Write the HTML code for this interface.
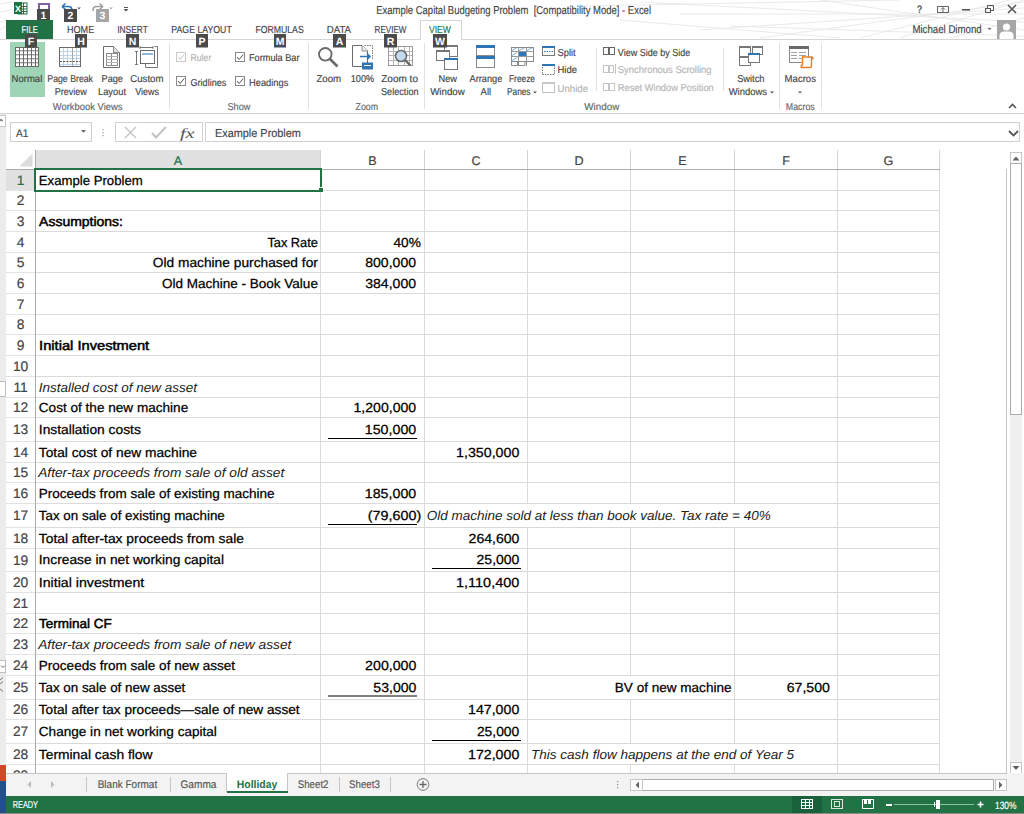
<!DOCTYPE html>
<html><head><meta charset="utf-8"><title>Excel</title>
<style>
html,body{margin:0;padding:0;width:1024px;height:814px;overflow:hidden;background:#fff;}
svg{display:block;font-family:"Liberation Sans", sans-serif;}
</style></head><body>
<svg width="1024" height="814" viewBox="0 0 1024 814" text-rendering="geometricPrecision">
<rect x="0" y="113" width="6" height="701" fill="#ececec" />
<rect x="-0.5" y="381.5" width="6" height="15" fill="#ffffff" stroke="#bdbdbd" stroke-width="1"/>
<rect x="-0.5" y="660.5" width="6" height="12" fill="#ffffff" stroke="#bdbdbd" stroke-width="1"/>
<path d="M1 665.5 L3 667.5 L5 665.5" fill="none" stroke="#666" stroke-width="1" />
<path d="M0 680 L3 677.5 M0 684 L3 681.5 M0 689 L3 691.5" fill="none" stroke="#777" stroke-width="1" />
<rect x="0" y="765" width="6" height="16" fill="#d24726" />
<rect x="0" y="781" width="6" height="33" fill="#234f8a" />
<rect x="6" y="150" width="1000" height="19" fill="#ffffff" />
<rect x="36" y="150" width="284" height="19" fill="#e1e1e1" />
<rect x="6" y="170" width="29" height="20" fill="#e1e1e1" />
<path d="M32.5 153.5 L32.5 166.5 L19.5 166.5 Z" fill="#dcdcdc" stroke="none" stroke-width="1" />
<rect x="6" y="169" width="934" height="1" fill="#ababab" />
<rect x="6" y="190" width="29" height="1" fill="#e3e3e3" />
<rect x="36" y="190" width="904" height="1" fill="#dadada" />
<rect x="6" y="210" width="29" height="1" fill="#e3e3e3" />
<rect x="36" y="210" width="904" height="1" fill="#dadada" />
<rect x="6" y="231" width="29" height="1" fill="#e3e3e3" />
<rect x="36" y="231" width="904" height="1" fill="#dadada" />
<rect x="6" y="252" width="29" height="1" fill="#e3e3e3" />
<rect x="36" y="252" width="904" height="1" fill="#dadada" />
<rect x="6" y="272" width="29" height="1" fill="#e3e3e3" />
<rect x="36" y="272" width="904" height="1" fill="#dadada" />
<rect x="6" y="293" width="29" height="1" fill="#e3e3e3" />
<rect x="36" y="293" width="904" height="1" fill="#dadada" />
<rect x="6" y="314" width="29" height="1" fill="#e3e3e3" />
<rect x="36" y="314" width="904" height="1" fill="#dadada" />
<rect x="6" y="334" width="29" height="1" fill="#e3e3e3" />
<rect x="36" y="334" width="904" height="1" fill="#dadada" />
<rect x="6" y="355" width="29" height="1" fill="#e3e3e3" />
<rect x="36" y="355" width="904" height="1" fill="#dadada" />
<rect x="6" y="376" width="29" height="1" fill="#e3e3e3" />
<rect x="36" y="376" width="904" height="1" fill="#dadada" />
<rect x="6" y="397" width="29" height="1" fill="#e3e3e3" />
<rect x="36" y="397" width="904" height="1" fill="#dadada" />
<rect x="6" y="417" width="29" height="1" fill="#e3e3e3" />
<rect x="36" y="417" width="904" height="1" fill="#dadada" />
<rect x="6" y="441" width="29" height="1" fill="#e3e3e3" />
<rect x="36" y="441" width="904" height="1" fill="#dadada" />
<rect x="6" y="462" width="29" height="1" fill="#e3e3e3" />
<rect x="36" y="462" width="904" height="1" fill="#dadada" />
<rect x="6" y="482" width="29" height="1" fill="#e3e3e3" />
<rect x="36" y="482" width="904" height="1" fill="#dadada" />
<rect x="6" y="503" width="29" height="1" fill="#e3e3e3" />
<rect x="36" y="503" width="904" height="1" fill="#dadada" />
<rect x="6" y="527" width="29" height="1" fill="#e3e3e3" />
<rect x="36" y="527" width="904" height="1" fill="#dadada" />
<rect x="6" y="548" width="29" height="1" fill="#e3e3e3" />
<rect x="36" y="548" width="904" height="1" fill="#dadada" />
<rect x="6" y="571" width="29" height="1" fill="#e3e3e3" />
<rect x="36" y="571" width="904" height="1" fill="#dadada" />
<rect x="6" y="592" width="29" height="1" fill="#e3e3e3" />
<rect x="36" y="592" width="904" height="1" fill="#dadada" />
<rect x="6" y="613" width="29" height="1" fill="#e3e3e3" />
<rect x="36" y="613" width="904" height="1" fill="#dadada" />
<rect x="6" y="633" width="29" height="1" fill="#e3e3e3" />
<rect x="36" y="633" width="904" height="1" fill="#dadada" />
<rect x="6" y="654" width="29" height="1" fill="#e3e3e3" />
<rect x="36" y="654" width="904" height="1" fill="#dadada" />
<rect x="6" y="675" width="29" height="1" fill="#e3e3e3" />
<rect x="36" y="675" width="904" height="1" fill="#dadada" />
<rect x="6" y="699" width="29" height="1" fill="#e3e3e3" />
<rect x="36" y="699" width="904" height="1" fill="#dadada" />
<rect x="6" y="719" width="29" height="1" fill="#e3e3e3" />
<rect x="36" y="719" width="904" height="1" fill="#dadada" />
<rect x="6" y="743" width="29" height="1" fill="#e3e3e3" />
<rect x="36" y="743" width="904" height="1" fill="#dadada" />
<rect x="6" y="764" width="29" height="1" fill="#e3e3e3" />
<rect x="36" y="764" width="904" height="1" fill="#dadada" />
<rect x="6" y="773" width="1001" height="1" fill="#c6c6c6" />
<rect x="35" y="150" width="1" height="623" fill="#ababab" />
<rect x="320" y="150" width="1" height="19" fill="#d4d4d4" />
<rect x="320" y="170" width="1" height="20" fill="#dadada" />
<rect x="320" y="191" width="1" height="19" fill="#dadada" />
<rect x="320" y="211" width="1" height="20" fill="#dadada" />
<rect x="320" y="232" width="1" height="20" fill="#dadada" />
<rect x="320" y="253" width="1" height="19" fill="#dadada" />
<rect x="320" y="273" width="1" height="20" fill="#dadada" />
<rect x="320" y="294" width="1" height="20" fill="#dadada" />
<rect x="320" y="315" width="1" height="19" fill="#dadada" />
<rect x="320" y="335" width="1" height="20" fill="#dadada" />
<rect x="320" y="356" width="1" height="20" fill="#dadada" />
<rect x="320" y="377" width="1" height="20" fill="#dadada" />
<rect x="320" y="398" width="1" height="19" fill="#dadada" />
<rect x="320" y="418" width="1" height="23" fill="#dadada" />
<rect x="320" y="442" width="1" height="20" fill="#dadada" />
<rect x="320" y="463" width="1" height="19" fill="#dadada" />
<rect x="320" y="483" width="1" height="20" fill="#dadada" />
<rect x="320" y="504" width="1" height="23" fill="#dadada" />
<rect x="320" y="528" width="1" height="20" fill="#dadada" />
<rect x="320" y="549" width="1" height="22" fill="#dadada" />
<rect x="320" y="572" width="1" height="20" fill="#dadada" />
<rect x="320" y="593" width="1" height="20" fill="#dadada" />
<rect x="320" y="614" width="1" height="19" fill="#dadada" />
<rect x="320" y="634" width="1" height="20" fill="#dadada" />
<rect x="320" y="655" width="1" height="20" fill="#dadada" />
<rect x="320" y="676" width="1" height="23" fill="#dadada" />
<rect x="320" y="700" width="1" height="19" fill="#dadada" />
<rect x="320" y="720" width="1" height="23" fill="#dadada" />
<rect x="320" y="744" width="1" height="20" fill="#dadada" />
<rect x="320" y="765" width="1" height="8" fill="#dadada" />
<rect x="424" y="150" width="1" height="19" fill="#d4d4d4" />
<rect x="424" y="170" width="1" height="20" fill="#dadada" />
<rect x="424" y="191" width="1" height="19" fill="#dadada" />
<rect x="424" y="211" width="1" height="20" fill="#dadada" />
<rect x="424" y="232" width="1" height="20" fill="#dadada" />
<rect x="424" y="253" width="1" height="19" fill="#dadada" />
<rect x="424" y="273" width="1" height="20" fill="#dadada" />
<rect x="424" y="294" width="1" height="20" fill="#dadada" />
<rect x="424" y="315" width="1" height="19" fill="#dadada" />
<rect x="424" y="335" width="1" height="20" fill="#dadada" />
<rect x="424" y="356" width="1" height="20" fill="#dadada" />
<rect x="424" y="377" width="1" height="20" fill="#dadada" />
<rect x="424" y="398" width="1" height="19" fill="#dadada" />
<rect x="424" y="418" width="1" height="23" fill="#dadada" />
<rect x="424" y="442" width="1" height="20" fill="#dadada" />
<rect x="424" y="463" width="1" height="19" fill="#dadada" />
<rect x="424" y="483" width="1" height="20" fill="#dadada" />
<rect x="424" y="504" width="1" height="23" fill="#dadada" />
<rect x="424" y="528" width="1" height="20" fill="#dadada" />
<rect x="424" y="549" width="1" height="22" fill="#dadada" />
<rect x="424" y="572" width="1" height="20" fill="#dadada" />
<rect x="424" y="593" width="1" height="20" fill="#dadada" />
<rect x="424" y="614" width="1" height="19" fill="#dadada" />
<rect x="424" y="634" width="1" height="20" fill="#dadada" />
<rect x="424" y="655" width="1" height="20" fill="#dadada" />
<rect x="424" y="676" width="1" height="23" fill="#dadada" />
<rect x="424" y="700" width="1" height="19" fill="#dadada" />
<rect x="424" y="720" width="1" height="23" fill="#dadada" />
<rect x="424" y="744" width="1" height="20" fill="#dadada" />
<rect x="424" y="765" width="1" height="8" fill="#dadada" />
<rect x="527" y="150" width="1" height="19" fill="#d4d4d4" />
<rect x="527" y="170" width="1" height="20" fill="#dadada" />
<rect x="527" y="191" width="1" height="19" fill="#dadada" />
<rect x="527" y="211" width="1" height="20" fill="#dadada" />
<rect x="527" y="232" width="1" height="20" fill="#dadada" />
<rect x="527" y="253" width="1" height="19" fill="#dadada" />
<rect x="527" y="273" width="1" height="20" fill="#dadada" />
<rect x="527" y="294" width="1" height="20" fill="#dadada" />
<rect x="527" y="315" width="1" height="19" fill="#dadada" />
<rect x="527" y="335" width="1" height="20" fill="#dadada" />
<rect x="527" y="356" width="1" height="20" fill="#dadada" />
<rect x="527" y="377" width="1" height="20" fill="#dadada" />
<rect x="527" y="398" width="1" height="19" fill="#dadada" />
<rect x="527" y="418" width="1" height="23" fill="#dadada" />
<rect x="527" y="442" width="1" height="20" fill="#dadada" />
<rect x="527" y="463" width="1" height="19" fill="#dadada" />
<rect x="527" y="483" width="1" height="20" fill="#dadada" />
<rect x="527" y="528" width="1" height="20" fill="#dadada" />
<rect x="527" y="549" width="1" height="22" fill="#dadada" />
<rect x="527" y="572" width="1" height="20" fill="#dadada" />
<rect x="527" y="593" width="1" height="20" fill="#dadada" />
<rect x="527" y="614" width="1" height="19" fill="#dadada" />
<rect x="527" y="634" width="1" height="20" fill="#dadada" />
<rect x="527" y="655" width="1" height="20" fill="#dadada" />
<rect x="527" y="676" width="1" height="23" fill="#dadada" />
<rect x="527" y="700" width="1" height="19" fill="#dadada" />
<rect x="527" y="720" width="1" height="23" fill="#dadada" />
<rect x="527" y="744" width="1" height="20" fill="#dadada" />
<rect x="527" y="765" width="1" height="8" fill="#dadada" />
<rect x="630" y="150" width="1" height="19" fill="#d4d4d4" />
<rect x="630" y="170" width="1" height="20" fill="#dadada" />
<rect x="630" y="191" width="1" height="19" fill="#dadada" />
<rect x="630" y="211" width="1" height="20" fill="#dadada" />
<rect x="630" y="232" width="1" height="20" fill="#dadada" />
<rect x="630" y="253" width="1" height="19" fill="#dadada" />
<rect x="630" y="273" width="1" height="20" fill="#dadada" />
<rect x="630" y="294" width="1" height="20" fill="#dadada" />
<rect x="630" y="315" width="1" height="19" fill="#dadada" />
<rect x="630" y="335" width="1" height="20" fill="#dadada" />
<rect x="630" y="356" width="1" height="20" fill="#dadada" />
<rect x="630" y="377" width="1" height="20" fill="#dadada" />
<rect x="630" y="398" width="1" height="19" fill="#dadada" />
<rect x="630" y="418" width="1" height="23" fill="#dadada" />
<rect x="630" y="442" width="1" height="20" fill="#dadada" />
<rect x="630" y="463" width="1" height="19" fill="#dadada" />
<rect x="630" y="483" width="1" height="20" fill="#dadada" />
<rect x="630" y="528" width="1" height="20" fill="#dadada" />
<rect x="630" y="549" width="1" height="22" fill="#dadada" />
<rect x="630" y="572" width="1" height="20" fill="#dadada" />
<rect x="630" y="593" width="1" height="20" fill="#dadada" />
<rect x="630" y="614" width="1" height="19" fill="#dadada" />
<rect x="630" y="634" width="1" height="20" fill="#dadada" />
<rect x="630" y="655" width="1" height="20" fill="#dadada" />
<rect x="630" y="700" width="1" height="19" fill="#dadada" />
<rect x="630" y="720" width="1" height="23" fill="#dadada" />
<rect x="630" y="765" width="1" height="8" fill="#dadada" />
<rect x="734" y="150" width="1" height="19" fill="#d4d4d4" />
<rect x="734" y="170" width="1" height="20" fill="#dadada" />
<rect x="734" y="191" width="1" height="19" fill="#dadada" />
<rect x="734" y="211" width="1" height="20" fill="#dadada" />
<rect x="734" y="232" width="1" height="20" fill="#dadada" />
<rect x="734" y="253" width="1" height="19" fill="#dadada" />
<rect x="734" y="273" width="1" height="20" fill="#dadada" />
<rect x="734" y="294" width="1" height="20" fill="#dadada" />
<rect x="734" y="315" width="1" height="19" fill="#dadada" />
<rect x="734" y="335" width="1" height="20" fill="#dadada" />
<rect x="734" y="356" width="1" height="20" fill="#dadada" />
<rect x="734" y="377" width="1" height="20" fill="#dadada" />
<rect x="734" y="398" width="1" height="19" fill="#dadada" />
<rect x="734" y="418" width="1" height="23" fill="#dadada" />
<rect x="734" y="442" width="1" height="20" fill="#dadada" />
<rect x="734" y="463" width="1" height="19" fill="#dadada" />
<rect x="734" y="483" width="1" height="20" fill="#dadada" />
<rect x="734" y="528" width="1" height="20" fill="#dadada" />
<rect x="734" y="549" width="1" height="22" fill="#dadada" />
<rect x="734" y="572" width="1" height="20" fill="#dadada" />
<rect x="734" y="593" width="1" height="20" fill="#dadada" />
<rect x="734" y="614" width="1" height="19" fill="#dadada" />
<rect x="734" y="634" width="1" height="20" fill="#dadada" />
<rect x="734" y="655" width="1" height="20" fill="#dadada" />
<rect x="734" y="676" width="1" height="23" fill="#dadada" />
<rect x="734" y="700" width="1" height="19" fill="#dadada" />
<rect x="734" y="720" width="1" height="23" fill="#dadada" />
<rect x="734" y="765" width="1" height="8" fill="#dadada" />
<rect x="837" y="150" width="1" height="19" fill="#d4d4d4" />
<rect x="837" y="170" width="1" height="20" fill="#dadada" />
<rect x="837" y="191" width="1" height="19" fill="#dadada" />
<rect x="837" y="211" width="1" height="20" fill="#dadada" />
<rect x="837" y="232" width="1" height="20" fill="#dadada" />
<rect x="837" y="253" width="1" height="19" fill="#dadada" />
<rect x="837" y="273" width="1" height="20" fill="#dadada" />
<rect x="837" y="294" width="1" height="20" fill="#dadada" />
<rect x="837" y="315" width="1" height="19" fill="#dadada" />
<rect x="837" y="335" width="1" height="20" fill="#dadada" />
<rect x="837" y="356" width="1" height="20" fill="#dadada" />
<rect x="837" y="377" width="1" height="20" fill="#dadada" />
<rect x="837" y="398" width="1" height="19" fill="#dadada" />
<rect x="837" y="418" width="1" height="23" fill="#dadada" />
<rect x="837" y="442" width="1" height="20" fill="#dadada" />
<rect x="837" y="463" width="1" height="19" fill="#dadada" />
<rect x="837" y="483" width="1" height="20" fill="#dadada" />
<rect x="837" y="504" width="1" height="23" fill="#dadada" />
<rect x="837" y="528" width="1" height="20" fill="#dadada" />
<rect x="837" y="549" width="1" height="22" fill="#dadada" />
<rect x="837" y="572" width="1" height="20" fill="#dadada" />
<rect x="837" y="593" width="1" height="20" fill="#dadada" />
<rect x="837" y="614" width="1" height="19" fill="#dadada" />
<rect x="837" y="634" width="1" height="20" fill="#dadada" />
<rect x="837" y="655" width="1" height="20" fill="#dadada" />
<rect x="837" y="676" width="1" height="23" fill="#dadada" />
<rect x="837" y="700" width="1" height="19" fill="#dadada" />
<rect x="837" y="720" width="1" height="23" fill="#dadada" />
<rect x="837" y="744" width="1" height="20" fill="#dadada" />
<rect x="837" y="765" width="1" height="8" fill="#dadada" />
<rect x="939" y="150" width="1" height="19" fill="#d4d4d4" />
<rect x="939" y="170" width="1" height="20" fill="#dadada" />
<rect x="939" y="191" width="1" height="19" fill="#dadada" />
<rect x="939" y="211" width="1" height="20" fill="#dadada" />
<rect x="939" y="232" width="1" height="20" fill="#dadada" />
<rect x="939" y="253" width="1" height="19" fill="#dadada" />
<rect x="939" y="273" width="1" height="20" fill="#dadada" />
<rect x="939" y="294" width="1" height="20" fill="#dadada" />
<rect x="939" y="315" width="1" height="19" fill="#dadada" />
<rect x="939" y="335" width="1" height="20" fill="#dadada" />
<rect x="939" y="356" width="1" height="20" fill="#dadada" />
<rect x="939" y="377" width="1" height="20" fill="#dadada" />
<rect x="939" y="398" width="1" height="19" fill="#dadada" />
<rect x="939" y="418" width="1" height="23" fill="#dadada" />
<rect x="939" y="442" width="1" height="20" fill="#dadada" />
<rect x="939" y="463" width="1" height="19" fill="#dadada" />
<rect x="939" y="483" width="1" height="20" fill="#dadada" />
<rect x="939" y="504" width="1" height="23" fill="#dadada" />
<rect x="939" y="528" width="1" height="20" fill="#dadada" />
<rect x="939" y="549" width="1" height="22" fill="#dadada" />
<rect x="939" y="572" width="1" height="20" fill="#dadada" />
<rect x="939" y="593" width="1" height="20" fill="#dadada" />
<rect x="939" y="614" width="1" height="19" fill="#dadada" />
<rect x="939" y="634" width="1" height="20" fill="#dadada" />
<rect x="939" y="655" width="1" height="20" fill="#dadada" />
<rect x="939" y="676" width="1" height="23" fill="#dadada" />
<rect x="939" y="700" width="1" height="19" fill="#dadada" />
<rect x="939" y="720" width="1" height="23" fill="#dadada" />
<rect x="939" y="744" width="1" height="20" fill="#dadada" />
<rect x="939" y="765" width="1" height="8" fill="#dadada" />
<rect x="1006" y="169" width="1" height="605" fill="#c6c6c6" />
<text x="178.00" y="165.00" font-size="12.6" fill="#217346" font-weight="normal" font-style="normal" text-anchor="middle" stroke="#217346" stroke-width="0.2">A</text>
<text x="372.50" y="165.00" font-size="12.6" fill="#444444" font-weight="normal" font-style="normal" text-anchor="middle" stroke="#444444" stroke-width="0.2">B</text>
<text x="476.00" y="165.00" font-size="12.6" fill="#444444" font-weight="normal" font-style="normal" text-anchor="middle" stroke="#444444" stroke-width="0.2">C</text>
<text x="579.00" y="165.00" font-size="12.6" fill="#444444" font-weight="normal" font-style="normal" text-anchor="middle" stroke="#444444" stroke-width="0.2">D</text>
<text x="682.50" y="165.00" font-size="12.6" fill="#444444" font-weight="normal" font-style="normal" text-anchor="middle" stroke="#444444" stroke-width="0.2">E</text>
<text x="786.00" y="165.00" font-size="12.6" fill="#444444" font-weight="normal" font-style="normal" text-anchor="middle" stroke="#444444" stroke-width="0.2">F</text>
<text x="888.50" y="165.00" font-size="12.6" fill="#444444" font-weight="normal" font-style="normal" text-anchor="middle" stroke="#444444" stroke-width="0.2">G</text>
<text x="20.60" y="184.70" font-size="13.8" fill="#217346" font-weight="normal" font-style="normal" text-anchor="middle" stroke="#217346" stroke-width="0.2">1</text>
<text x="20.60" y="205.20" font-size="13.8" fill="#444444" font-weight="normal" font-style="normal" text-anchor="middle" stroke="#444444" stroke-width="0.2">2</text>
<text x="20.60" y="225.70" font-size="13.8" fill="#444444" font-weight="normal" font-style="normal" text-anchor="middle" stroke="#444444" stroke-width="0.2">3</text>
<text x="20.60" y="246.70" font-size="13.8" fill="#444444" font-weight="normal" font-style="normal" text-anchor="middle" stroke="#444444" stroke-width="0.2">4</text>
<text x="20.60" y="267.20" font-size="13.8" fill="#444444" font-weight="normal" font-style="normal" text-anchor="middle" stroke="#444444" stroke-width="0.2">5</text>
<text x="20.60" y="287.70" font-size="13.8" fill="#444444" font-weight="normal" font-style="normal" text-anchor="middle" stroke="#444444" stroke-width="0.2">6</text>
<text x="20.60" y="308.70" font-size="13.8" fill="#444444" font-weight="normal" font-style="normal" text-anchor="middle" stroke="#444444" stroke-width="0.2">7</text>
<text x="20.60" y="329.20" font-size="13.8" fill="#444444" font-weight="normal" font-style="normal" text-anchor="middle" stroke="#444444" stroke-width="0.2">8</text>
<text x="20.60" y="349.70" font-size="13.8" fill="#444444" font-weight="normal" font-style="normal" text-anchor="middle" stroke="#444444" stroke-width="0.2">9</text>
<text x="20.60" y="370.70" font-size="13.8" fill="#444444" font-weight="normal" font-style="normal" text-anchor="middle" stroke="#444444" stroke-width="0.2">10</text>
<text x="20.60" y="391.70" font-size="13.8" fill="#444444" font-weight="normal" font-style="normal" text-anchor="middle" stroke="#444444" stroke-width="0.2">11</text>
<text x="20.60" y="412.20" font-size="13.8" fill="#444444" font-weight="normal" font-style="normal" text-anchor="middle" stroke="#444444" stroke-width="0.2">12</text>
<text x="20.60" y="434.20" font-size="13.8" fill="#444444" font-weight="normal" font-style="normal" text-anchor="middle" stroke="#444444" stroke-width="0.2">13</text>
<text x="20.60" y="456.70" font-size="13.8" fill="#444444" font-weight="normal" font-style="normal" text-anchor="middle" stroke="#444444" stroke-width="0.2">14</text>
<text x="20.60" y="477.20" font-size="13.8" fill="#444444" font-weight="normal" font-style="normal" text-anchor="middle" stroke="#444444" stroke-width="0.2">15</text>
<text x="20.60" y="497.70" font-size="13.8" fill="#444444" font-weight="normal" font-style="normal" text-anchor="middle" stroke="#444444" stroke-width="0.2">16</text>
<text x="20.60" y="520.20" font-size="13.8" fill="#444444" font-weight="normal" font-style="normal" text-anchor="middle" stroke="#444444" stroke-width="0.2">17</text>
<text x="20.60" y="542.70" font-size="13.8" fill="#444444" font-weight="normal" font-style="normal" text-anchor="middle" stroke="#444444" stroke-width="0.2">18</text>
<text x="20.60" y="564.70" font-size="13.8" fill="#444444" font-weight="normal" font-style="normal" text-anchor="middle" stroke="#444444" stroke-width="0.2">19</text>
<text x="20.60" y="586.70" font-size="13.8" fill="#444444" font-weight="normal" font-style="normal" text-anchor="middle" stroke="#444444" stroke-width="0.2">20</text>
<text x="20.60" y="607.70" font-size="13.8" fill="#444444" font-weight="normal" font-style="normal" text-anchor="middle" stroke="#444444" stroke-width="0.2">21</text>
<text x="20.60" y="628.20" font-size="13.8" fill="#444444" font-weight="normal" font-style="normal" text-anchor="middle" stroke="#444444" stroke-width="0.2">22</text>
<text x="20.60" y="648.70" font-size="13.8" fill="#444444" font-weight="normal" font-style="normal" text-anchor="middle" stroke="#444444" stroke-width="0.2">23</text>
<text x="20.60" y="669.70" font-size="13.8" fill="#444444" font-weight="normal" font-style="normal" text-anchor="middle" stroke="#444444" stroke-width="0.2">24</text>
<text x="20.60" y="692.20" font-size="13.8" fill="#444444" font-weight="normal" font-style="normal" text-anchor="middle" stroke="#444444" stroke-width="0.2">25</text>
<text x="20.60" y="714.20" font-size="13.8" fill="#444444" font-weight="normal" font-style="normal" text-anchor="middle" stroke="#444444" stroke-width="0.2">26</text>
<text x="20.60" y="736.20" font-size="13.8" fill="#444444" font-weight="normal" font-style="normal" text-anchor="middle" stroke="#444444" stroke-width="0.2">27</text>
<text x="20.60" y="758.70" font-size="13.8" fill="#444444" font-weight="normal" font-style="normal" text-anchor="middle" stroke="#444444" stroke-width="0.2">28</text>
<clipPath id="c29"><rect x="6" y="765" width="29" height="8"/></clipPath>
<text clip-path="url(#c29)" x="20.60" y="780.00" font-size="13.8" fill="#444444" font-weight="normal" font-style="normal" text-anchor="middle" stroke="#444444" stroke-width="0.2">29</text>
<rect x="34" y="168" width="288" height="2" fill="#217346" />
<rect x="34" y="190" width="285" height="2" fill="#217346" />
<rect x="34" y="168" width="2" height="24" fill="#217346" />
<rect x="320" y="168" width="2" height="19" fill="#217346" />
<rect x="319" y="188" width="4" height="4" fill="#217346" />
<text x="38.80" y="185.00" font-size="13.2" fill="#000000" font-weight="normal" font-style="normal" textLength="103.90" lengthAdjust="spacingAndGlyphs" stroke="#000000" stroke-width="0.25">Example Problem</text>
<text x="39.10" y="226.00" font-size="13.2" fill="#000000" font-weight="normal" font-style="normal" textLength="83.90" lengthAdjust="spacingAndGlyphs" stroke="#000000" stroke-width="0.5">Assumptions:</text>
<text x="267.40" y="247.00" font-size="13.2" fill="#000000" font-weight="normal" font-style="normal" textLength="50.50" lengthAdjust="spacingAndGlyphs" stroke="#000000" stroke-width="0.25">Tax Rate</text>
<text x="152.70" y="267.00" font-size="13.2" fill="#000000" font-weight="normal" font-style="normal" textLength="165.20" lengthAdjust="spacingAndGlyphs" stroke="#000000" stroke-width="0.25">Old machine purchased for</text>
<text x="162.00" y="288.00" font-size="13.2" fill="#000000" font-weight="normal" font-style="normal" textLength="155.90" lengthAdjust="spacingAndGlyphs" stroke="#000000" stroke-width="0.25">Old Machine - Book Value</text>
<text x="393.50" y="247.00" font-size="13.2" fill="#000000" font-weight="normal" font-style="normal" textLength="27.40" lengthAdjust="spacingAndGlyphs" stroke="#000000" stroke-width="0.25">40%</text>
<text x="365.20" y="267.00" font-size="13.2" fill="#000000" font-weight="normal" font-style="normal" textLength="50.90" lengthAdjust="spacingAndGlyphs" stroke="#000000" stroke-width="0.25">800,000</text>
<text x="365.20" y="288.00" font-size="13.2" fill="#000000" font-weight="normal" font-style="normal" textLength="50.90" lengthAdjust="spacingAndGlyphs" stroke="#000000" stroke-width="0.25">384,000</text>
<text x="39.10" y="350.00" font-size="13.2" fill="#000000" font-weight="normal" font-style="normal" textLength="110.10" lengthAdjust="spacingAndGlyphs" stroke="#000000" stroke-width="0.5">Initial Investment</text>
<text x="38.80" y="392.00" font-size="13.2" fill="#222" font-weight="normal" font-style="italic" textLength="158.20" lengthAdjust="spacingAndGlyphs">Installed cost of new asset</text>
<text x="38.80" y="412.00" font-size="13.2" fill="#000000" font-weight="normal" font-style="normal" textLength="149.40" lengthAdjust="spacingAndGlyphs" stroke="#000000" stroke-width="0.25">Cost of the new machine</text>
<text x="38.80" y="433.70" font-size="13.2" fill="#000000" font-weight="normal" font-style="normal" textLength="102.00" lengthAdjust="spacingAndGlyphs" stroke="#000000" stroke-width="0.25">Installation costs</text>
<text x="38.80" y="457.00" font-size="13.2" fill="#000000" font-weight="normal" font-style="normal" textLength="158.20" lengthAdjust="spacingAndGlyphs" stroke="#000000" stroke-width="0.25">Total cost of new machine</text>
<text x="38.20" y="477.00" font-size="13.2" fill="#222" font-weight="normal" font-style="italic" textLength="246.10" lengthAdjust="spacingAndGlyphs">After-tax proceeds from sale of old asset</text>
<text x="38.80" y="498.00" font-size="13.2" fill="#000000" font-weight="normal" font-style="normal" textLength="235.80" lengthAdjust="spacingAndGlyphs" stroke="#000000" stroke-width="0.25">Proceeds from sale of existing machine</text>
<text x="38.80" y="519.70" font-size="13.2" fill="#000000" font-weight="normal" font-style="normal" textLength="186.00" lengthAdjust="spacingAndGlyphs" stroke="#000000" stroke-width="0.25">Tax on sale of existing machine</text>
<text x="38.80" y="543.00" font-size="13.2" fill="#000000" font-weight="normal" font-style="normal" textLength="205.10" lengthAdjust="spacingAndGlyphs" stroke="#000000" stroke-width="0.25">Total after-tax proceeds from sale</text>
<text x="38.80" y="563.70" font-size="13.2" fill="#000000" font-weight="normal" font-style="normal" textLength="185.20" lengthAdjust="spacingAndGlyphs" stroke="#000000" stroke-width="0.25">Increase in net working capital</text>
<text x="38.80" y="587.00" font-size="13.2" fill="#000000" font-weight="normal" font-style="normal" textLength="105.50" lengthAdjust="spacingAndGlyphs" stroke="#000000" stroke-width="0.25">Initial investment</text>
<text x="39.10" y="628.00" font-size="13.2" fill="#000000" font-weight="normal" font-style="normal" textLength="72.60" lengthAdjust="spacingAndGlyphs" stroke="#000000" stroke-width="0.5">Terminal CF</text>
<text x="38.20" y="649.00" font-size="13.2" fill="#222" font-weight="normal" font-style="italic" textLength="253.20" lengthAdjust="spacingAndGlyphs">After-tax proceeds from sale of new asset</text>
<text x="38.80" y="670.00" font-size="13.2" fill="#000000" font-weight="normal" font-style="normal" textLength="196.30" lengthAdjust="spacingAndGlyphs" stroke="#000000" stroke-width="0.25">Proceeds from sale of new asset</text>
<text x="38.80" y="691.70" font-size="13.2" fill="#000000" font-weight="normal" font-style="normal" textLength="146.50" lengthAdjust="spacingAndGlyphs" stroke="#000000" stroke-width="0.25">Tax on sale of new asset</text>
<text x="38.80" y="714.00" font-size="13.2" fill="#000000" font-weight="normal" font-style="normal" textLength="260.80" lengthAdjust="spacingAndGlyphs" stroke="#000000" stroke-width="0.25">Total after tax proceeds—sale of new asset</text>
<text x="38.80" y="735.70" font-size="13.2" fill="#000000" font-weight="normal" font-style="normal" textLength="178.10" lengthAdjust="spacingAndGlyphs" stroke="#000000" stroke-width="0.25">Change in net working capital</text>
<text x="38.80" y="759.00" font-size="13.2" fill="#000000" font-weight="normal" font-style="normal" textLength="113.70" lengthAdjust="spacingAndGlyphs" stroke="#000000" stroke-width="0.25">Terminal cash flow</text>
<text x="353.50" y="412.00" font-size="13.2" fill="#000000" font-weight="normal" font-style="normal" textLength="62.70" lengthAdjust="spacingAndGlyphs" stroke="#000000" stroke-width="0.25">1,200,000</text>
<text x="364.80" y="433.70" font-size="13.2" fill="#000000" font-weight="normal" font-style="normal" textLength="51.40" lengthAdjust="spacingAndGlyphs" stroke="#000000" stroke-width="0.25">150,000</text>
<rect x="328" y="438" width="89" height="1" fill="#000" />
<text x="456.00" y="457.00" font-size="13.2" fill="#000000" font-weight="normal" font-style="normal" textLength="63.40" lengthAdjust="spacingAndGlyphs" stroke="#000000" stroke-width="0.25">1,350,000</text>
<text x="364.80" y="498.00" font-size="13.2" fill="#000000" font-weight="normal" font-style="normal" textLength="51.40" lengthAdjust="spacingAndGlyphs" stroke="#000000" stroke-width="0.25">185,000</text>
<text x="367.80" y="519.70" font-size="13.2" fill="#000000" font-weight="normal" font-style="normal" textLength="53.40" lengthAdjust="spacingAndGlyphs" stroke="#000000" stroke-width="0.25">(79,600)</text>
<rect x="328" y="524" width="89" height="1" fill="#000" />
<text x="426.70" y="519.70" font-size="13.2" fill="#222" font-weight="normal" font-style="italic" textLength="344.00" lengthAdjust="spacingAndGlyphs">Old machine sold at less than book value. Tax rate = 40%</text>
<text x="468.60" y="543.00" font-size="13.2" fill="#000000" font-weight="normal" font-style="normal" textLength="50.80" lengthAdjust="spacingAndGlyphs" stroke="#000000" stroke-width="0.25">264,600</text>
<text x="476.60" y="563.70" font-size="13.2" fill="#000000" font-weight="normal" font-style="normal" textLength="42.80" lengthAdjust="spacingAndGlyphs" stroke="#000000" stroke-width="0.25">25,000</text>
<rect x="432" y="568" width="89" height="1" fill="#000" />
<text x="456.00" y="587.00" font-size="13.2" fill="#000000" font-weight="normal" font-style="normal" textLength="63.40" lengthAdjust="spacingAndGlyphs" stroke="#000000" stroke-width="0.25">1,110,400</text>
<text x="365.10" y="670.00" font-size="13.2" fill="#000000" font-weight="normal" font-style="normal" textLength="51.30" lengthAdjust="spacingAndGlyphs" stroke="#000000" stroke-width="0.25">200,000</text>
<text x="373.30" y="691.70" font-size="13.2" fill="#000000" font-weight="normal" font-style="normal" textLength="43.10" lengthAdjust="spacingAndGlyphs" stroke="#000000" stroke-width="0.25">53,000</text>
<rect x="328" y="695" width="89" height="2" fill="#808080" />
<text x="614.80" y="691.70" font-size="13.2" fill="#000000" font-weight="normal" font-style="normal" textLength="116.70" lengthAdjust="spacingAndGlyphs" stroke="#000000" stroke-width="0.25">BV of new machine</text>
<text x="786.70" y="691.70" font-size="13.2" fill="#000000" font-weight="normal" font-style="normal" textLength="43.30" lengthAdjust="spacingAndGlyphs" stroke="#000000" stroke-width="0.25">67,500</text>
<text x="468.00" y="714.00" font-size="13.2" fill="#000000" font-weight="normal" font-style="normal" textLength="51.30" lengthAdjust="spacingAndGlyphs" stroke="#000000" stroke-width="0.25">147,000</text>
<text x="476.90" y="735.70" font-size="13.2" fill="#000000" font-weight="normal" font-style="normal" textLength="42.40" lengthAdjust="spacingAndGlyphs" stroke="#000000" stroke-width="0.25">25,000</text>
<rect x="432" y="740" width="89" height="1" fill="#000" />
<text x="468.00" y="759.00" font-size="13.2" fill="#000000" font-weight="normal" font-style="normal" textLength="51.30" lengthAdjust="spacingAndGlyphs" stroke="#000000" stroke-width="0.25">172,000</text>
<text x="531.00" y="759.00" font-size="13.2" fill="#222" font-weight="normal" font-style="italic" textLength="263.00" lengthAdjust="spacingAndGlyphs">This cash flow happens at the end of Year 5</text>
<rect x="1007" y="150" width="17" height="623" fill="#ffffff" />
<rect x="1010" y="164" width="12" height="599" fill="#f0f0f0" />
<rect x="1010.5" y="152.5" width="11" height="11" fill="#ffffff" stroke="#c6c6c6" stroke-width="1"/>
<path d="M1012.5 160.5 L1016 156.5 L1019.5 160.5 Z" fill="#606060" stroke="none" stroke-width="1" />
<rect x="1010.5" y="163.5" width="11" height="251" fill="#ffffff" stroke="#ababab" stroke-width="1"/>
<rect x="1010.5" y="762.5" width="11" height="11" fill="#ffffff" stroke="#c6c6c6" stroke-width="1"/>
<path d="M1012.5 766 L1019.5 766 L1016 770 Z" fill="#606060" stroke="none" stroke-width="1" />
<line x1="640" y1="2" x2="1024" y2="22" stroke="#e4e4e4" stroke-width="0.8"/>
<line x1="700" y1="30" x2="1024" y2="8" stroke="#e4e4e4" stroke-width="0.8"/>
<line x1="760" y1="38" x2="1024" y2="2" stroke="#e4e4e4" stroke-width="0.8"/>
<line x1="820" y1="0" x2="1024" y2="30" stroke="#e4e4e4" stroke-width="0.8"/>
<line x1="680" y1="14" x2="1024" y2="14" stroke="#e4e4e4" stroke-width="0.8"/>
<line x1="900" y1="38" x2="1024" y2="0" stroke="#e4e4e4" stroke-width="0.8"/>
<line x1="580" y1="6" x2="900" y2="0" stroke="#e4e4e4" stroke-width="0.8"/>
<line x1="730" y1="26" x2="1024" y2="36" stroke="#e4e4e4" stroke-width="0.8"/>
<line x1="860" y1="38" x2="1010" y2="0" stroke="#e4e4e4" stroke-width="0.8"/>
<line x1="950" y1="38" x2="1024" y2="18" stroke="#e4e4e4" stroke-width="0.8"/>
<line x1="620" y1="20" x2="840" y2="38" stroke="#e4e4e4" stroke-width="0.8"/>
<line x1="0" y1="4" x2="12" y2="2" stroke="#e4e4e4" stroke-width="0.8"/>
<line x1="0" y1="12" x2="12" y2="10" stroke="#e4e4e4" stroke-width="0.8"/>
<line x1="0" y1="30" x2="10" y2="24" stroke="#e4e4e4" stroke-width="0.8"/>
<line x1="0" y1="22" x2="9" y2="20" stroke="#e4e4e4" stroke-width="0.8"/>
<rect x="18" y="3" width="9" height="11" fill="#ffffff" stroke="#217346" stroke-width="1"/>
<rect x="21" y="6" width="6" height="1" fill="#217346" />
<rect x="21" y="8.5" width="6" height="1" fill="#217346" />
<rect x="21" y="11" width="6" height="1" fill="#217346" />
<rect x="23" y="3" width="1" height="11" fill="#217346" />
<rect x="14" y="2" width="8" height="12" fill="#1e7145" />
<text x="15.00" y="11.50" font-size="9" fill="#ffffff" font-weight="bold" font-style="normal" textLength="6.00" lengthAdjust="spacingAndGlyphs">X</text>
<rect x="39" y="4" width="10" height="7" fill="none" stroke="#8064a2" stroke-width="2"/>
<rect x="37" y="9" width="13" height="13" fill="#4b4b4b" />
<text x="43.50" y="19.00" font-size="10.5" fill="#ffffff" font-weight="bold" font-style="normal" text-anchor="middle">1</text>
<path d="M62 6.5 L65.5 3.5 M62 6.5 L65.5 9.5 M62 6.5 L68 6.5 Q72 6.5 72 10 L72 11" fill="none" stroke="#2e75b6" stroke-width="1.6" />
<path d="M77 7.5 L81 7.5 L79 9.5 Z" fill="#666" stroke="none" stroke-width="1" />
<rect x="64" y="9" width="13" height="13" fill="#4b4b4b" />
<text x="70.50" y="19.00" font-size="10.5" fill="#ffffff" font-weight="bold" font-style="normal" text-anchor="middle">2</text>
<path d="M103 6.5 L99.5 3.5 M103 6.5 L99.5 9.5 M103 6.5 L97 6.5 Q93 6.5 93 10 L93 11" fill="none" stroke="#a0a0a0" stroke-width="1.6" />
<path d="M109 7.5 L113 7.5 L111 9.5 Z" fill="#b0b0b0" stroke="none" stroke-width="1" />
<rect x="96" y="9" width="13" height="13" fill="#a6a6a6" />
<text x="102.50" y="19.00" font-size="10.5" fill="#ffffff" font-weight="bold" font-style="normal" text-anchor="middle">3</text>
<rect x="124" y="7" width="4" height="1" fill="#555" />
<path d="M123.5 9 L128.5 9 L126 11.5 Z" fill="#555" stroke="none" stroke-width="1" />
<text x="376.30" y="14.00" font-size="11.5" fill="#444" font-weight="normal" font-style="normal" textLength="274.70" lengthAdjust="spacingAndGlyphs" stroke="#444" stroke-width="0.15">Example Capital Budgeting Problem  [Compatibility Mode] - Excel</text>
<text x="916.70" y="13.00" font-size="11" fill="#555" font-weight="bold" font-style="normal" textLength="5.60" lengthAdjust="spacingAndGlyphs">?</text>
<rect x="937.5" y="6.5" width="11" height="6" fill="none" stroke="#666" stroke-width="1"/>
<path d="M943 12 L943 8 M941 9.5 L943 7.5 L945 9.5" fill="none" stroke="#666" stroke-width="1" />
<rect x="962" y="9" width="8" height="1.5" fill="#555" />
<rect x="985.5" y="8.5" width="5" height="4" fill="none" stroke="#555" stroke-width="1"/>
<path d="M987.5 8 L987.5 5.5 L993.5 5.5 L993.5 10.5 L991 10.5" fill="none" stroke="#555" stroke-width="1" />
<path d="M1008 5 L1016 13 M1016 5 L1008 13" fill="none" stroke="#555" stroke-width="1.6" />
<rect x="6" y="20" width="47" height="20" fill="#217346" />
<text x="21.60" y="33.30" font-size="10.2" fill="#ffffff" font-weight="normal" font-style="normal" textLength="16.40" lengthAdjust="spacingAndGlyphs" stroke="#ffffff" stroke-width="0.15">FILE</text>
<text x="67.00" y="33.30" font-size="10.2" fill="#444" font-weight="normal" font-style="normal" textLength="27.20" lengthAdjust="spacingAndGlyphs" stroke="#444" stroke-width="0.15">HOME</text>
<text x="117.20" y="33.30" font-size="10.2" fill="#444" font-weight="normal" font-style="normal" textLength="30.70" lengthAdjust="spacingAndGlyphs" stroke="#444" stroke-width="0.15">INSERT</text>
<text x="171.30" y="33.30" font-size="10.2" fill="#444" font-weight="normal" font-style="normal" textLength="60.50" lengthAdjust="spacingAndGlyphs" stroke="#444" stroke-width="0.15">PAGE LAYOUT</text>
<text x="255.40" y="33.30" font-size="10.2" fill="#444" font-weight="normal" font-style="normal" textLength="48.30" lengthAdjust="spacingAndGlyphs" stroke="#444" stroke-width="0.15">FORMULAS</text>
<text x="326.70" y="33.30" font-size="10.2" fill="#444" font-weight="normal" font-style="normal" textLength="24.30" lengthAdjust="spacingAndGlyphs" stroke="#444" stroke-width="0.15">DATA</text>
<text x="374.60" y="33.30" font-size="10.2" fill="#444" font-weight="normal" font-style="normal" textLength="31.80" lengthAdjust="spacingAndGlyphs" stroke="#444" stroke-width="0.15">REVIEW</text>
<rect x="0" y="39" width="420" height="1" fill="#d5d5d5" />
<rect x="462" y="39" width="562" height="1" fill="#d5d5d5" />
<rect x="420" y="20" width="1" height="20" fill="#d5d5d5" />
<rect x="461" y="20" width="1" height="20" fill="#d5d5d5" />
<rect x="420" y="20" width="42" height="1" fill="#d5d5d5" />
<text x="429.00" y="33.30" font-size="10.2" fill="#217346" font-weight="normal" font-style="normal" textLength="21.90" lengthAdjust="spacingAndGlyphs" stroke="#217346" stroke-width="0.15">VIEW</text>
<text x="912.40" y="33.00" font-size="11.3" fill="#444" font-weight="normal" font-style="normal" textLength="69.30" lengthAdjust="spacingAndGlyphs" stroke="#444" stroke-width="0.15">Michael Dimond</text>
<path d="M987.5 28 L991.5 28 L989.5 30 Z" fill="#666" stroke="none" stroke-width="1" />
<rect x="997" y="20" width="19" height="19" fill="#a6a6a6" />
<circle cx="1006.5" cy="27" r="3.6" fill="#ffffff"/>
<path d="M999.5 39 L999.5 35 Q1000 31.5 1004 31.5 L1009 31.5 Q1013 31.5 1013.5 35 L1013.5 39 Z" fill="#ffffff" stroke="none" stroke-width="1" />
<rect x="0" y="113" width="1024" height="1" fill="#d5d5d5" />
<rect x="10" y="42" width="35" height="55" fill="#9fd5b7" />
<rect x="15" y="47" width="24" height="20" fill="#ffffff" />
<rect x="15.5" y="47.5" width="23" height="19" fill="none" stroke="#6a6a6a" stroke-width="1"/>
<rect x="16" y="50" width="22" height="1" fill="#9a9a9a" />
<rect x="16" y="54" width="22" height="1" fill="#9a9a9a" />
<rect x="16" y="58" width="22" height="1" fill="#9a9a9a" />
<rect x="16" y="62" width="22" height="1" fill="#9a9a9a" />
<rect x="16" y="51" width="22" height="1" fill="#d8d8d8" />
<rect x="16" y="55" width="22" height="1" fill="#d8d8d8" />
<rect x="16" y="59" width="22" height="1" fill="#d8d8d8" />
<rect x="16" y="63" width="22" height="1" fill="#d8d8d8" />
<rect x="19" y="47" width="1" height="20" fill="#6a6a6a" />
<rect x="23" y="47" width="1" height="20" fill="#6a6a6a" />
<rect x="27" y="47" width="1" height="20" fill="#6a6a6a" />
<rect x="31" y="47" width="1" height="20" fill="#6a6a6a" />
<rect x="35" y="47" width="1" height="20" fill="#6a6a6a" />
<text x="11.60" y="82.00" font-size="10" fill="#444" font-weight="normal" font-style="normal" textLength="30.70" lengthAdjust="spacingAndGlyphs" stroke="#444" stroke-width="0.15">Normal</text>
<rect x="59" y="47" width="22" height="20" fill="#ffffff" />
<rect x="63" y="48" width="1" height="18" fill="#bcd3ec" />
<rect x="67" y="48" width="1" height="18" fill="#bcd3ec" />
<rect x="76" y="48" width="1" height="18" fill="#bcd3ec" />
<rect x="60" y="51" width="20" height="1" fill="#bcd3ec" />
<rect x="60" y="55" width="20" height="1" fill="#bcd3ec" />
<rect x="60" y="58" width="20" height="1" fill="#bcd3ec" />
<rect x="60" y="64" width="20" height="1" fill="#bcd3ec" />
<rect x="72" y="48" width="1" height="18" fill="#a8a8a8" />
<line x1="60" y1="61.5" x2="80" y2="61.5" stroke="#555" stroke-width="1" stroke-dasharray="2,1.2"/>
<rect x="59.5" y="47.5" width="21" height="19" fill="none" stroke="#6a6a6a" stroke-width="1"/>
<text x="47.30" y="82.00" font-size="10" fill="#444" font-weight="normal" font-style="normal" textLength="45.70" lengthAdjust="spacingAndGlyphs" stroke="#444" stroke-width="0.15">Page Break</text>
<text x="54.80" y="94.50" font-size="10" fill="#444" font-weight="normal" font-style="normal" textLength="31.90" lengthAdjust="spacingAndGlyphs" stroke="#444" stroke-width="0.15">Preview</text>
<path d="M103.5 46.5 L113.5 46.5 L119.5 52.5 L119.5 67.5 L103.5 67.5 Z" fill="#fff" stroke="#6a6a6a" stroke-width="1" />
<path d="M113.5 46.5 L113.5 52.5 L119.5 52.5" fill="#e0e0e0" stroke="#8a8a8a" stroke-width="1" />
<rect x="106.5" y="53.5" width="11" height="12" fill="none" stroke="#8a8a8a" stroke-width="1"/>
<rect x="111" y="53" width="1" height="13" fill="#8a8a8a" />
<rect x="106" y="56" width="12" height="1" fill="#b0b0b0" />
<rect x="106" y="59" width="12" height="1" fill="#b0b0b0" />
<rect x="106" y="62" width="12" height="1" fill="#b0b0b0" />
<text x="101.60" y="82.00" font-size="10" fill="#444" font-weight="normal" font-style="normal" textLength="21.20" lengthAdjust="spacingAndGlyphs" stroke="#444" stroke-width="0.15">Page</text>
<text x="98.00" y="94.50" font-size="10" fill="#444" font-weight="normal" font-style="normal" textLength="28.00" lengthAdjust="spacingAndGlyphs" stroke="#444" stroke-width="0.15">Layout</text>
<path d="M136.5 51 L136.5 65 M135 51.5 L138 51.5 M135 64.5 L138 64.5" fill="none" stroke="#777" stroke-width="1" />
<path d="M140 47.5 L153 47.5 M140 46 L140 49 M153 46 L153 49" fill="none" stroke="#777" stroke-width="1" />
<path d="M154.5 46.5 L157.5 46.5 L157.5 67.5 L145.5 67.5 L145.5 64" fill="none" stroke="#777" stroke-width="1" />
<rect x="140" y="50" width="15" height="14" fill="#ffffff" />
<rect x="140.5" y="50.5" width="14" height="13" fill="none" stroke="#6a6a6a" stroke-width="1"/>
<rect x="142" y="53" width="11" height="2" fill="#8fb4de" />
<text x="130.30" y="82.00" font-size="10" fill="#444" font-weight="normal" font-style="normal" textLength="33.20" lengthAdjust="spacingAndGlyphs" stroke="#444" stroke-width="0.15">Custom</text>
<text x="135.30" y="94.50" font-size="10" fill="#444" font-weight="normal" font-style="normal" textLength="23.70" lengthAdjust="spacingAndGlyphs" stroke="#444" stroke-width="0.15">Views</text>
<text x="52.80" y="109.50" font-size="10" fill="#666" font-weight="normal" font-style="normal" textLength="69.70" lengthAdjust="spacingAndGlyphs" stroke="#666" stroke-width="0.15">Workbook Views</text>
<rect x="169" y="43" width="1" height="66" fill="#e1e1e1" />
<rect x="176.5" y="52.5" width="9" height="9" fill="#fff" stroke="#c8c8c8" stroke-width="1"/>
<path d="M178 57 L180.2 59.5 L184.2 54.5" fill="none" stroke="#c0c0c0" stroke-width="1" />
<text x="190.50" y="61.00" font-size="10" fill="#b4b4b4" font-weight="normal" font-style="normal" textLength="20.80" lengthAdjust="spacingAndGlyphs" stroke="#b4b4b4" stroke-width="0.15">Ruler</text>
<rect x="235.5" y="52.5" width="9" height="9" fill="#fff" stroke="#8a8a8a" stroke-width="1"/>
<path d="M237 57 L239.2 59.5 L243.2 54.5" fill="none" stroke="#555" stroke-width="1" />
<text x="249.00" y="61.00" font-size="10" fill="#444" font-weight="normal" font-style="normal" textLength="50.50" lengthAdjust="spacingAndGlyphs" stroke="#444" stroke-width="0.15">Formula Bar</text>
<rect x="176.5" y="76.5" width="9" height="9" fill="#fff" stroke="#8a8a8a" stroke-width="1"/>
<path d="M178 81 L180.2 83.5 L184.2 78.5" fill="none" stroke="#555" stroke-width="1" />
<text x="190.50" y="86.00" font-size="10" fill="#444" font-weight="normal" font-style="normal" textLength="35.90" lengthAdjust="spacingAndGlyphs" stroke="#444" stroke-width="0.15">Gridlines</text>
<rect x="235.5" y="76.5" width="9" height="9" fill="#fff" stroke="#8a8a8a" stroke-width="1"/>
<path d="M237 81 L239.2 83.5 L243.2 78.5" fill="none" stroke="#555" stroke-width="1" />
<text x="249.00" y="86.00" font-size="10" fill="#444" font-weight="normal" font-style="normal" textLength="39.40" lengthAdjust="spacingAndGlyphs" stroke="#444" stroke-width="0.15">Headings</text>
<text x="227.50" y="109.50" font-size="10" fill="#666" font-weight="normal" font-style="normal" textLength="22.80" lengthAdjust="spacingAndGlyphs" stroke="#666" stroke-width="0.15">Show</text>
<rect x="308" y="43" width="1" height="66" fill="#e1e1e1" />
<circle cx="325.3" cy="54.3" r="6.3" fill="none" stroke="#6a6a6a" stroke-width="1.8"/>
<path d="M330 59 L337.5 66.5" fill="none" stroke="#6a6a6a" stroke-width="2.6" />
<text x="316.40" y="82.00" font-size="10" fill="#444" font-weight="normal" font-style="normal" textLength="24.80" lengthAdjust="spacingAndGlyphs" stroke="#444" stroke-width="0.15">Zoom</text>
<path d="M352.5 45.5 L362 45.5 L367.5 51 L367.5 66.5 L352.5 66.5 Z" fill="#fff" stroke="#6a6a6a" stroke-width="1" />
<path d="M362 45.5 L362 51 L367.5 51" fill="#eee" stroke="#8a8a8a" stroke-width="1" />
<path d="M364.5 45.5 L372.5 45.5 L372.5 60" fill="none" stroke="#777" stroke-width="1" stroke-dasharray="1.5,1"/>
<path d="M360 56.5 L370 56.5 M367 53.5 L370 56.5 L367 59.5" fill="none" stroke="#2e75b6" stroke-width="1.5" />
<rect x="362" y="62.5" width="11" height="7" fill="#2e75b6" />
<rect x="364" y="65" width="7" height="1" fill="#ffffff" />
<text x="350.70" y="82.00" font-size="10" fill="#444" font-weight="normal" font-style="normal" textLength="23.50" lengthAdjust="spacingAndGlyphs" stroke="#444" stroke-width="0.15">100%</text>
<rect x="389" y="47" width="23" height="18" fill="#ffffff" />
<rect x="393" y="47" width="1" height="18" fill="#b5b5b5" />
<rect x="398" y="47" width="1" height="18" fill="#b5b5b5" />
<rect x="404" y="47" width="1" height="18" fill="#b5b5b5" />
<rect x="409" y="47" width="1" height="18" fill="#b5b5b5" />
<rect x="389" y="51" width="23" height="1" fill="#b5b5b5" />
<rect x="389" y="55" width="23" height="1" fill="#b5b5b5" />
<rect x="389" y="60" width="23" height="1" fill="#b5b5b5" />
<rect x="388.5" y="46.5" width="24" height="19" fill="none" stroke="#9a9a9a" stroke-width="1"/>
<circle cx="401" cy="56" r="5.5" fill="#c5d9f1" stroke="#6a6a6a" stroke-width="1.6"/>
<path d="M405 60 L410.5 65.5" fill="none" stroke="#6a6a6a" stroke-width="2.4" />
<text x="381.20" y="82.00" font-size="10" fill="#444" font-weight="normal" font-style="normal" textLength="36.80" lengthAdjust="spacingAndGlyphs" stroke="#444" stroke-width="0.15">Zoom to</text>
<text x="381.00" y="94.50" font-size="10" fill="#444" font-weight="normal" font-style="normal" textLength="37.60" lengthAdjust="spacingAndGlyphs" stroke="#444" stroke-width="0.15">Selection</text>
<text x="355.50" y="109.50" font-size="10" fill="#666" font-weight="normal" font-style="normal" textLength="22.50" lengthAdjust="spacingAndGlyphs" stroke="#666" stroke-width="0.15">Zoom</text>
<rect x="424" y="43" width="1" height="66" fill="#e1e1e1" />
<rect x="444.5" y="45.5" width="13" height="11" fill="#fff" stroke="#777" stroke-width="1"/>
<rect x="444" y="45" width="14" height="2" fill="#777" />
<rect x="436.5" y="50.5" width="13" height="10" fill="#fff" stroke="#777" stroke-width="1"/>
<rect x="436" y="50" width="14" height="2" fill="#777" />
<rect x="444.5" y="58.5" width="13" height="11" fill="#fff" stroke="#777" stroke-width="1"/>
<rect x="444" y="58" width="14" height="2" fill="#2e75b6" />
<text x="438.50" y="82.00" font-size="10" fill="#444" font-weight="normal" font-style="normal" textLength="18.50" lengthAdjust="spacingAndGlyphs" stroke="#444" stroke-width="0.15">New</text>
<text x="430.20" y="94.50" font-size="10" fill="#444" font-weight="normal" font-style="normal" textLength="34.60" lengthAdjust="spacingAndGlyphs" stroke="#444" stroke-width="0.15">Window</text>
<rect x="476.5" y="45.5" width="18" height="10" fill="#fff" stroke="#8a8a8a" stroke-width="1"/>
<rect x="476" y="45" width="19" height="3" fill="#2e75b6" />
<rect x="476.5" y="56.5" width="18" height="11" fill="#fff" stroke="#8a8a8a" stroke-width="1"/>
<rect x="476" y="56" width="19" height="3" fill="#2e75b6" />
<text x="469.60" y="82.00" font-size="10" fill="#444" font-weight="normal" font-style="normal" textLength="32.70" lengthAdjust="spacingAndGlyphs" stroke="#444" stroke-width="0.15">Arrange</text>
<text x="480.60" y="94.50" font-size="10" fill="#444" font-weight="normal" font-style="normal" textLength="10.60" lengthAdjust="spacingAndGlyphs" stroke="#444" stroke-width="0.15">All</text>
<rect x="511" y="47" width="23" height="15" fill="#fff" />
<rect x="518" y="47" width="1" height="19" fill="#9a9a9a" />
<rect x="526" y="47" width="1" height="19" fill="#9a9a9a" />
<rect x="511" y="51" width="23" height="1" fill="#9a9a9a" />
<rect x="511" y="56" width="23" height="1" fill="#9a9a9a" />
<rect x="511.5" y="47.5" width="22" height="14" fill="none" stroke="#8a8a8a" stroke-width="1"/>
<rect x="519" y="52" width="7" height="4" fill="#2e75b6" />
<path d="M512 50.5 L517 47.5 M519 50.5 L525 47.5 M527 50.5 L533 47.5 M512 55.5 L517 52.5 M512 60.5 L517 57.5" fill="none" stroke="#5b9bd5" stroke-width="0.8" />
<path d="M511.5 62 L511.5 65.5 L517.5 65.5 L517.5 62 M518.5 62 L518.5 65.5 L525 65.5 L525 62" fill="none" stroke="#8a8a8a" stroke-width="1" />
<text x="509.00" y="82.00" font-size="10" fill="#444" font-weight="normal" font-style="normal" textLength="26.00" lengthAdjust="spacingAndGlyphs" stroke="#444" stroke-width="0.15">Freeze</text>
<text x="507.00" y="94.50" font-size="10" fill="#444" font-weight="normal" font-style="normal" textLength="23.50" lengthAdjust="spacingAndGlyphs" stroke="#444" stroke-width="0.15">Panes</text>
<path d="M533 91.5 L537 91.5 L535 93.5 Z" fill="#555" stroke="none" stroke-width="1" />
<rect x="542.5" y="46.5" width="12" height="9" fill="#fff" stroke="#777" stroke-width="1"/>
<rect x="542" y="46" width="13" height="2" fill="#2e75b6" />
<line x1="544" y1="51.5" x2="553" y2="51.5" stroke="#2e75b6" stroke-width="1" stroke-dasharray="1.5,1"/>
<text x="557.50" y="55.50" font-size="10" fill="#444" font-weight="normal" font-style="normal" textLength="18.10" lengthAdjust="spacingAndGlyphs" stroke="#444" stroke-width="0.15">Split</text>
<rect x="542.5" y="64.5" width="12" height="10" fill="none" stroke="#777" stroke-width="1" stroke-dasharray="1.5,1"/>
<rect x="542" y="64" width="13" height="2" fill="#2e75b6" />
<text x="557.50" y="73.00" font-size="10" fill="#444" font-weight="normal" font-style="normal" textLength="19.50" lengthAdjust="spacingAndGlyphs" stroke="#444" stroke-width="0.15">Hide</text>
<rect x="542.5" y="82.5" width="12" height="10" fill="#fff" stroke="#c0c0c0" stroke-width="1"/>
<rect x="542" y="82" width="13" height="2" fill="#c8c8c8" />
<text x="557.50" y="91.50" font-size="10" fill="#b4b4b4" font-weight="normal" font-style="normal" textLength="30.50" lengthAdjust="spacingAndGlyphs" stroke="#b4b4b4" stroke-width="0.15">Unhide</text>
<rect x="596" y="48" width="1" height="43" fill="#e1e1e1" />
<rect x="603.5" y="47.5" width="5" height="7" fill="none" stroke="#666" stroke-width="1"/>
<rect x="609.5" y="47.5" width="5" height="7" fill="none" stroke="#666" stroke-width="1"/>
<text x="617.80" y="55.50" font-size="10" fill="#444" font-weight="normal" font-style="normal" textLength="72.50" lengthAdjust="spacingAndGlyphs" stroke="#444" stroke-width="0.15">View Side by Side</text>
<rect x="603.5" y="65.5" width="5" height="7" fill="none" stroke="#c4c4c4" stroke-width="1"/>
<rect x="609.5" y="65.5" width="4" height="7" fill="none" stroke="#c4c4c4" stroke-width="1"/>
<rect x="615" y="64" width="1" height="10" fill="#c4c4c4" />
<text x="617.80" y="73.00" font-size="10" fill="#b4b4b4" font-weight="normal" font-style="normal" textLength="93.80" lengthAdjust="spacingAndGlyphs" stroke="#b4b4b4" stroke-width="0.15">Synchronous Scrolling</text>
<rect x="603.5" y="83.5" width="5" height="7" fill="none" stroke="#c4c4c4" stroke-width="1"/>
<rect x="609.5" y="83.5" width="5" height="7" fill="none" stroke="#c4c4c4" stroke-width="1"/>
<text x="617.80" y="91.30" font-size="10" fill="#b4b4b4" font-weight="normal" font-style="normal" textLength="96.00" lengthAdjust="spacingAndGlyphs" stroke="#b4b4b4" stroke-width="0.15">Reset Window Position</text>
<rect x="723" y="48" width="1" height="43" fill="#e1e1e1" />
<rect x="739.5" y="46.5" width="11" height="10" fill="#fff" stroke="#777" stroke-width="1"/>
<rect x="739" y="46" width="12" height="2" fill="#777" />
<rect x="752.5" y="46.5" width="10" height="8" fill="#fff" stroke="#777" stroke-width="1"/>
<rect x="752" y="46" width="11" height="2" fill="#777" />
<rect x="739.5" y="56.5" width="11" height="9" fill="#fff" stroke="#777" stroke-width="1"/>
<rect x="739" y="56" width="12" height="2" fill="#777" />
<rect x="748.5" y="53.5" width="11" height="9" fill="#fff" stroke="#777" stroke-width="1"/>
<rect x="748" y="53" width="12" height="2" fill="#2e75b6" />
<text x="737.20" y="82.00" font-size="10" fill="#444" font-weight="normal" font-style="normal" textLength="27.30" lengthAdjust="spacingAndGlyphs" stroke="#444" stroke-width="0.15">Switch</text>
<text x="728.70" y="94.50" font-size="10" fill="#444" font-weight="normal" font-style="normal" textLength="38.30" lengthAdjust="spacingAndGlyphs" stroke="#444" stroke-width="0.15">Windows</text>
<path d="M770 91.5 L774 91.5 L772 93.5 Z" fill="#555" stroke="none" stroke-width="1" />
<text x="584.30" y="109.50" font-size="10" fill="#666" font-weight="normal" font-style="normal" textLength="35.00" lengthAdjust="spacingAndGlyphs" stroke="#666" stroke-width="0.15">Window</text>
<rect x="779" y="43" width="1" height="66" fill="#e1e1e1" />
<rect x="789" y="46" width="20" height="17" fill="#fff" />
<rect x="789.5" y="46.5" width="19" height="16" fill="none" stroke="#8a8a8a" stroke-width="1"/>
<rect x="789" y="46" width="20" height="3" fill="#6a6a6a" />
<rect x="791" y="52" width="6" height="1" fill="#a0a0a0" />
<rect x="799" y="52" width="7" height="1" fill="#a0a0a0" />
<rect x="791" y="55" width="6" height="1" fill="#a0a0a0" />
<rect x="799" y="55" width="7" height="1" fill="#a0a0a0" />
<rect x="791" y="58" width="6" height="1" fill="#a0a0a0" />
<rect x="799" y="58" width="7" height="1" fill="#a0a0a0" />
<path d="M802.5 57 L811.5 57 Q813 57 813 58.5 L811.5 58.5 L811.5 66 Q811.5 67.5 810 67.5 L801.5 67.5 Q800.5 66 802 65 L802.5 65 Z" fill="#fff" stroke="#e87d27" stroke-width="1.4" />
<text x="784.60" y="82.00" font-size="10" fill="#444" font-weight="normal" font-style="normal" textLength="31.40" lengthAdjust="spacingAndGlyphs" stroke="#444" stroke-width="0.15">Macros</text>
<path d="M798 91.5 L802 91.5 L800 93.5 Z" fill="#555" stroke="none" stroke-width="1" />
<text x="785.80" y="109.50" font-size="10" fill="#666" font-weight="normal" font-style="normal" textLength="28.90" lengthAdjust="spacingAndGlyphs" stroke="#666" stroke-width="0.15">Macros</text>
<rect x="821" y="43" width="1" height="66" fill="#e1e1e1" />
<path d="M1009 108 L1012.5 104.5 L1016 108" fill="none" stroke="#555" stroke-width="1.6" />
<rect x="25" y="34" width="12" height="13.5" fill="#4b4b4b" />
<text x="31.00" y="44.50" font-size="10.5" fill="#ffffff" font-weight="bold" font-style="normal" text-anchor="middle">F</text>
<rect x="75" y="34" width="12" height="13.5" fill="#4b4b4b" />
<text x="81.00" y="44.50" font-size="10.5" fill="#ffffff" font-weight="bold" font-style="normal" text-anchor="middle">H</text>
<rect x="126" y="34" width="13" height="13.5" fill="#4b4b4b" />
<text x="132.50" y="44.50" font-size="10.5" fill="#ffffff" font-weight="bold" font-style="normal" text-anchor="middle">N</text>
<rect x="196" y="34" width="12" height="13.5" fill="#4b4b4b" />
<text x="202.00" y="44.50" font-size="10.5" fill="#ffffff" font-weight="bold" font-style="normal" text-anchor="middle">P</text>
<rect x="274" y="34" width="12" height="13.5" fill="#4b4b4b" />
<text x="280.00" y="44.50" font-size="10.5" fill="#ffffff" font-weight="bold" font-style="normal" text-anchor="middle">M</text>
<rect x="333" y="34" width="13" height="13.5" fill="#4b4b4b" />
<text x="339.50" y="44.50" font-size="10.5" fill="#ffffff" font-weight="bold" font-style="normal" text-anchor="middle">A</text>
<rect x="384" y="34" width="13" height="13.5" fill="#4b4b4b" />
<text x="390.50" y="44.50" font-size="10.5" fill="#ffffff" font-weight="bold" font-style="normal" text-anchor="middle">R</text>
<rect x="433" y="34" width="14" height="13.5" fill="#4b4b4b" />
<text x="440.00" y="44.50" font-size="10.5" fill="#ffffff" font-weight="bold" font-style="normal" text-anchor="middle">W</text>
<rect x="6" y="114" width="1018" height="36" fill="#ffffff" />
<rect x="-1.5" y="115.5" width="7" height="11" fill="#fff" stroke="#c6c6c6" stroke-width="1"/>
<path d="M-0.5 121 L1 119.5 L2.5 121" fill="none" stroke="#666" stroke-width="1.2" />
<rect x="10.5" y="122.5" width="81" height="19" fill="#fff" stroke="#d0d0d0" stroke-width="1"/>
<text x="16.10" y="137.00" font-size="11" fill="#444" font-weight="normal" font-style="normal" textLength="12.40" lengthAdjust="spacingAndGlyphs" stroke="#444" stroke-width="0.15">A1</text>
<path d="M81 130 L86 130 L83.5 132.8 Z" fill="#666" stroke="none" stroke-width="1" />
<rect x="102.5" y="129" width="1" height="1.2" fill="#888" />
<rect x="102.5" y="132" width="1" height="1.2" fill="#888" />
<rect x="102.5" y="135" width="1" height="1.2" fill="#888" />
<rect x="115.5" y="122.5" width="87" height="19" fill="#fff" stroke="#d0d0d0" stroke-width="1"/>
<path d="M125 127 L136 138 M136 127 L125 138" fill="none" stroke="#c4c4c4" stroke-width="1.4" />
<path d="M152 133 L156 137.5 L166 127" fill="none" stroke="#c4c4c4" stroke-width="2.2" />
<text x="180.00" y="137.50" font-size="14" font-family="Liberation Serif" fill="#555" font-weight="normal" font-style="italic" textLength="14.50" lengthAdjust="spacingAndGlyphs">fx</text>
<rect x="205.5" y="122.5" width="814" height="19" fill="#fff" stroke="#d0d0d0" stroke-width="1"/>
<text x="215.00" y="136.50" font-size="11.5" fill="#444" font-weight="normal" font-style="normal" textLength="85.90" lengthAdjust="spacingAndGlyphs" stroke="#444" stroke-width="0.15">Example Problem</text>
<path d="M1009 131 L1013.5 135.5 L1018 131" fill="none" stroke="#555" stroke-width="1.8" />
<rect x="6" y="774" width="1018" height="22" fill="#f3f3f3" />
<rect x="6" y="773" width="1001" height="1" fill="#c6c6c6" />
<rect x="1007" y="773" width="17" height="23" fill="#f3f3f3" />
<path d="M31 781 L27.5 784.5 L31 788 Z" fill="#bcbcbc" stroke="none" stroke-width="1" />
<path d="M51 781 L54.5 784.5 L51 788 Z" fill="#bcbcbc" stroke="none" stroke-width="1" />
<rect x="86" y="777" width="1" height="15" fill="#c6c6c6" />
<text x="97.70" y="788.00" font-size="11" fill="#555" font-weight="normal" font-style="normal" textLength="59.50" lengthAdjust="spacingAndGlyphs" stroke="#555" stroke-width="0.15">Blank Format</text>
<rect x="170" y="777" width="1" height="15" fill="#c6c6c6" />
<text x="180.50" y="788.00" font-size="11" fill="#555" font-weight="normal" font-style="normal" textLength="36.00" lengthAdjust="spacingAndGlyphs" stroke="#555" stroke-width="0.15">Gamma</text>
<rect x="227" y="773" width="61" height="20" fill="#ffffff" />
<rect x="226" y="773" width="1" height="19" fill="#c6c6c6" />
<rect x="287" y="773" width="1" height="19" fill="#c6c6c6" />
<rect x="227" y="791" width="61" height="2" fill="#217346" />
<text x="236.80" y="787.50" font-size="11" fill="#217346" font-weight="bold" font-style="normal" textLength="40.40" lengthAdjust="spacingAndGlyphs">Holliday</text>
<text x="297.70" y="788.00" font-size="11" fill="#555" font-weight="normal" font-style="normal" textLength="30.80" lengthAdjust="spacingAndGlyphs" stroke="#555" stroke-width="0.15">Sheet2</text>
<rect x="339" y="777" width="1" height="15" fill="#c6c6c6" />
<text x="349.00" y="788.00" font-size="11" fill="#555" font-weight="normal" font-style="normal" textLength="30.80" lengthAdjust="spacingAndGlyphs" stroke="#555" stroke-width="0.15">Sheet3</text>
<rect x="390" y="777" width="1" height="15" fill="#c6c6c6" />
<circle cx="423" cy="784.5" r="5.8" fill="none" stroke="#777" stroke-width="1"/>
<path d="M423 781 L423 788 M419.5 784.5 L426.5 784.5" fill="none" stroke="#666" stroke-width="1.3" />
<rect x="617" y="781" width="1.2" height="1.2" fill="#888" />
<rect x="617" y="784" width="1.2" height="1.2" fill="#888" />
<rect x="617" y="787" width="1.2" height="1.2" fill="#888" />
<rect x="630.5" y="779.5" width="363" height="11" fill="#fff" stroke="#ababab" stroke-width="1"/>
<rect x="630.5" y="779.5" width="12" height="11" fill="#fff" stroke="#c6c6c6" stroke-width="1"/>
<path d="M639 781.5 L635.5 785 L639 788.5 Z" fill="#666" stroke="none" stroke-width="1" />
<rect x="995.5" y="779.5" width="11" height="11" fill="#fff" stroke="#c6c6c6" stroke-width="1"/>
<path d="M999 781.5 L1002.5 785 L999 788.5 Z" fill="#666" stroke="none" stroke-width="1" />
<rect x="6" y="796" width="1018" height="17" fill="#217346" />
<rect x="0" y="813" width="1024" height="1" fill="#8a8a8a" />
<text x="12.70" y="808.00" font-size="10" fill="#ffffff" font-weight="normal" font-style="normal" textLength="25.30" lengthAdjust="spacingAndGlyphs" stroke="#ffffff" stroke-width="0.15">READY</text>
<rect x="792" y="796" width="30" height="17" fill="#19613a" />
<rect x="801.5" y="799.5" width="11" height="9" fill="none" stroke="#fff" stroke-width="1"/>
<rect x="805" y="799" width="1" height="10" fill="#fff" />
<rect x="809" y="799" width="1" height="10" fill="#fff" />
<rect x="801" y="802" width="12" height="1" fill="#fff" />
<rect x="801" y="805" width="12" height="1" fill="#fff" />
<rect x="831.5" y="799.5" width="11" height="9" fill="none" stroke="#d9e8df" stroke-width="1"/>
<rect x="834.5" y="801.5" width="5" height="5" fill="none" stroke="#d9e8df" stroke-width="1"/>
<rect x="862.5" y="799.5" width="11" height="9" fill="none" stroke="#fff" stroke-width="1"/>
<rect x="864" y="800" width="3" height="4" fill="#fff" />
<rect x="868" y="800" width="3" height="4" fill="#fff" />
<rect x="886" y="804" width="6" height="2" fill="#fff" />
<rect x="894" y="804" width="80" height="1" fill="#8fbfa3" />
<rect x="936" y="800" width="4" height="9" fill="#fff" />
<rect x="934" y="802" width="1" height="5" fill="#fff" />
<path d="M977.5 804.5 L983.5 804.5 M980.5 801.5 L980.5 807.5" fill="none" stroke="#fff" stroke-width="1.6" />
<text x="995.00" y="809.00" font-size="10.5" fill="#ffffff" font-weight="normal" font-style="normal" textLength="21.50" lengthAdjust="spacingAndGlyphs" stroke="#ffffff" stroke-width="0.15">130%</text>
</svg>
</body></html>
